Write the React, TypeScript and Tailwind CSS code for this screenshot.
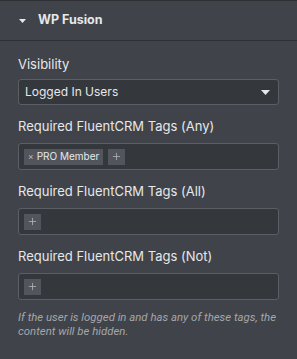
import { Plus } from "lucide-react";

function TagField({ tags }: { tags: string[] }) {
  return (
    <div className="flex h-[27px] items-center gap-[5px] rounded-[3px] border border-[#5b5e64] bg-[#34373c] px-[5px]">
      {tags.map((t) => (
        <span key={t} className="flex h-[16px] items-center gap-[3px] bg-[#52565c] px-[4px] text-[10px] text-[#e6e8ea]">
          <span className="text-[8.5px] text-[#b9bcc0]">×</span>
          {t}
        </span>
      ))}
      <span className="flex h-[16px] w-[17px] items-center justify-center bg-[#52565c] text-[#b9bcc0]">
        <Plus size={11} strokeWidth={1.6} />
      </span>
    </div>
  );
}

export default function App() {
  const fields = [
    { label: "Required FluentCRM Tags (Any)", tags: ["PRO Member"] },
    { label: "Required FluentCRM Tags (All)", tags: [] },
    { label: "Required FluentCRM Tags (Not)", tags: [] },
  ];
  return (
    <div className="h-[359px] w-[297px] bg-[#34373c] font-['Inter',sans-serif]">
      <div className="bg-[#404349]">
        <div className="flex h-[41px] items-center border-t border-b border-[#2e3034] pl-[19px]">
          <svg width="7" height="4" viewBox="0 0 7 4" className="mr-[12px]">
            <path d="M0 0h7L3.5 4z" fill="#e6e8ea" />
          </svg>
          <span className="text-[12.5px] font-bold text-[#e6e8ea]">WP Fusion</span>
        </div>
        <div className="px-[18px] pt-[14px] pb-[33px]">
          <div className="text-[13px] leading-[18px] text-[#e6e8ea]">Visibility</div>
          <div className="mt-[6px] flex h-[26px] items-center justify-between rounded-[3px] border border-[#5b5e64] bg-[#34373c] pl-[6px] pr-[8px]">
            <span className="text-[12px] text-[#e6e8ea]">Logged In Users</span>
            <svg width="9" height="5" viewBox="0 0 9 5">
              <path d="M0 0h9L4.5 5z" fill="#e6e8ea" />
            </svg>
          </div>
          {fields.map((f) => (
            <div key={f.label} className="mt-[12px]">
              <div className="text-[13px] leading-[18px] text-[#e6e8ea]">{f.label}</div>
              <div className="mt-[8px]">
                <TagField tags={f.tags} />
              </div>
            </div>
          ))}
          <p className="mt-[10px] font-['Roboto',sans-serif] text-[11.4px] leading-[14px] italic text-[#a4a7ab]">
            If the user is logged in and has any of these tags, the content will be hidden.
          </p>
        </div>
      </div>
    </div>
  );
}
